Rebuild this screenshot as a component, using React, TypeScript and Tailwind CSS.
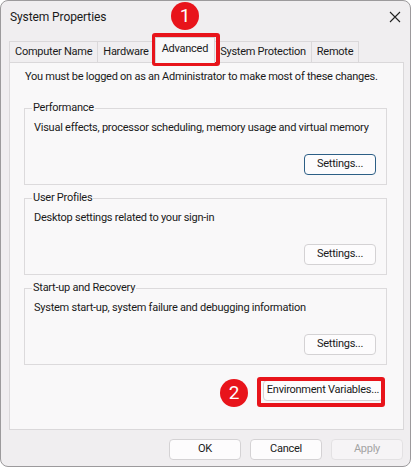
const FONT = { fontFamily: "'Segoe UI', Roboto, 'Liberation Sans', sans-serif" };

const TABS = ["Computer Name", "Hardware", "Advanced", "System Protection", "Remote"];

const GROUPS = [
  { title: "Performance", text: "Visual effects, processor scheduling, memory usage and virtual memory", focused: true },
  { title: "User Profiles", text: "Desktop settings related to your sign-in", focused: false },
  { title: "Start-up and Recovery", text: "System start-up, system failure and debugging information", focused: false },
];

function Button({ label, focused, disabled, w = "w-[72px]" }: { label: string; focused?: boolean; disabled?: boolean; w?: string }) {
  return (
    <div
      className={`${w} h-[21px] flex items-center justify-center whitespace-nowrap rounded-[4px] border ${
        disabled
          ? "border-[#e3e1e3] bg-[#f6f4f6] text-[#a3a3a3]"
          : focused
          ? "border-[#2d5f86] bg-[#fdfcfd] text-[#1a1a1a]"
          : "border-[#d4d2d4] bg-[#fdfcfd] text-[#1a1a1a]"
      }`}
    >
      {label}
    </div>
  );
}

function GroupBox({ title, text, focused }: { title: string; text: string; focused: boolean }) {
  return (
    <fieldset className="border border-[#dcdadc] w-[363px] min-w-0 px-[9px] pb-[9px]">
      <legend className="-ml-[2px] px-[1px] leading-[14px]">{title}</legend>
      <div className="leading-[16px] mt-[5px] whitespace-nowrap">{text}</div>
      <div className="flex justify-end pr-[1px] mt-[18px]">
        <Button label="Settings..." focused={focused} />
      </div>
    </fieldset>
  );
}

function Badge({ n, className }: { n: number; className: string }) {
  return (
    <div
      className={`absolute w-[28px] h-[28px] rounded-full bg-[#e8141b] text-white text-[19px] flex items-center justify-center ${className}`}
    >
      {n}
    </div>
  );
}

export default function App() {
  return (
    <div className="w-[412px] h-[468px] bg-white relative text-[#1a1a1a] text-[11px] tracking-[-0.25px]" style={FONT}>
      <div className="h-[467px] w-[411px] rounded-[8px] border border-[#9c9a9c] bg-[#f0eef0] flex flex-col overflow-hidden">
        {/* Title bar */}
        <div className="h-[31px] flex items-center justify-between pl-[9px] pr-[8px]">
          <span className="text-[12px] tracking-[-0.1px]">System Properties</span>
          <svg width="12" height="12" viewBox="0 0 12 12" className="mr-[1px]">
            <path d="M1 1 L11 11 M11 1 L1 11" stroke="#222" strokeWidth="1.1" fill="none" />
          </svg>
        </div>

        {/* Tabs */}
        <div className="flex items-end h-[30px] pl-[8px]">
          {TABS.map((t) =>
            t === "Advanced" ? (
              <div
                key={t}
                className="h-[26px] px-[6px] flex items-start pt-[3px] bg-[#f9f8f9] border border-b-0 border-[#d6d4d6] relative z-10 -mb-px"
              >
                {t}
              </div>
            ) : (
              <div
                key={t}
                className="h-[21px] px-[5px] flex items-center border border-b-0 border-l-0 first:border-l border-[#dad8da]"
              >
                {t}
              </div>
            )
          )}
        </div>

        {/* Panel */}
        <div className="mx-[8px] w-[395px] h-[368px] border border-[#dad8da] bg-[#f9f8f9] flex flex-col pl-[14px] pt-[6px]">
          <div className="leading-[16px] pl-[1px] whitespace-nowrap">
            You must be logged on as an Administrator to make most of these changes.
          </div>
          <div className="flex flex-col gap-[6px] mt-[16px]">
            {GROUPS.map((g) => (
              <GroupBox key={g.title} {...g} />
            ))}
          </div>
          <div className="flex justify-end w-[363px] mt-[15px] pr-[4px]">
            <Button label="Environment Variables..." w="w-[120px]" />
          </div>
        </div>

        {/* Footer buttons */}
        <div className="flex justify-end gap-[9px] pr-[7px] mt-[9px]">
          <Button label="OK" />
          <Button label="Cancel" />
          <Button label="Apply" disabled />
        </div>
      </div>

      {/* Annotations */}
      <div className="absolute left-[152px] top-[33px] w-[68px] h-[33px] border-[4px] border-[#e8141b] rounded-[3px]" />
      <Badge n={1} className="left-[171px] top-[2px]" />
      <div className="absolute left-[257px] top-[377px] w-[128px] h-[30px] border-[4px] border-[#e8141b] rounded-[3px]" />
      <Badge n={2} className="left-[220px] top-[379px]" />
    </div>
  );
}
